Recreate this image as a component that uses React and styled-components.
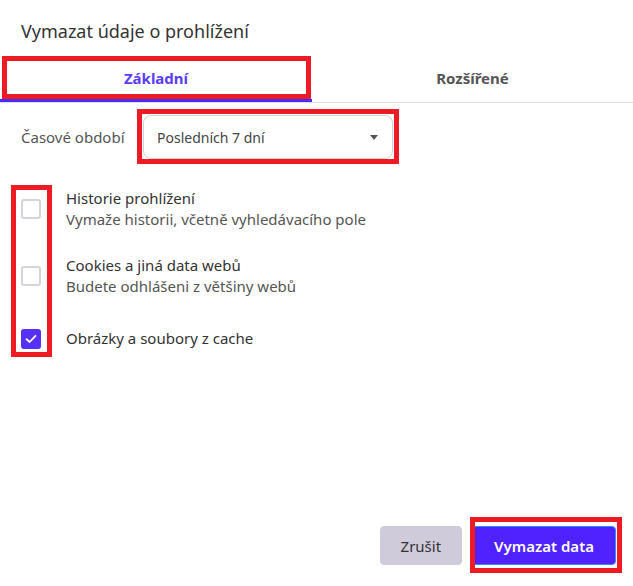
import React from 'react';
import styled, { createGlobalStyle } from 'styled-components';

const GlobalStyle = createGlobalStyle`
  html, body {
    margin: 0;
    padding: 0;
    background: #ffffff;
  }
  body {
    font-family: "Noto Sans", "Open Sans", Arial, sans-serif;
  }
`;

const Dialog = styled.div`
  position: relative;
  width: 633px;
  height: 586px;
  display: flex;
  flex-direction: column;
  background: #fff;
  color: #333;
  overflow: hidden;
`;

const Title = styled.h1`
  margin: 0;
  height: 56px;
  padding: 6px 21px 0;
  display: flex;
  align-items: center;
  font-size: 18px;
  font-weight: 400;
  color: #333;
  box-sizing: border-box;
`;

const TabBar = styled.div`
  display: flex;
  border-bottom: 1px solid #dcdcdc;
`;

const Tab = styled.div`
  flex: ${p => (p.$first ? '0 0 312px' : '1')};
  height: 46px;
  display: flex;
  align-items: center;
  justify-content: center;
  box-sizing: border-box;
  font-size: 15px;
  font-weight: 700;
  color: ${p => (p.$active ? '#5a3cf8' : '#555')};
  border-bottom: 3px solid ${p => (p.$active ? '#4a2bff' : 'transparent')};
`;

const Content = styled.div`
  padding: 12px 21px 0;
  display: flex;
  flex-direction: column;
`;

const PeriodRow = styled.div`
  display: flex;
  align-items: center;
`;

const PeriodLabel = styled.span`
  width: 122px;
  font-size: 15px;
  color: #555;
`;

const Select = styled.div`
  width: 250px;
  height: 44px;
  box-sizing: border-box;
  border: 1px solid #d2d2d2;
  border-radius: 8px;
  display: flex;
  align-items: center;
  justify-content: space-between;
  padding: 0 14px 0 13px;
  font-size: 14px;
  color: #444;
`;

const Caret = styled.span`
  width: 0;
  height: 0;
  border-left: 4px solid transparent;
  border-right: 4px solid transparent;
  border-top: 5px solid #555;
`;

const OptionList = styled.div`
  margin-top: 29px;
  display: flex;
  flex-direction: column;
  gap: 25px;
`;

const Option = styled.div`
  display: flex;
  align-items: center;
  gap: 25px;
  margin-top: ${p => (p.$single ? '6px' : '0')};
`;

const Box = styled.span`
  width: 20px;
  height: 20px;
  box-sizing: border-box;
  border-radius: 3px;
  flex: none;
  display: flex;
  align-items: center;
  justify-content: center;
  border: ${p => (p.$checked ? 'none' : '2px solid #d4d4da')};
  background: ${p => (p.$checked ? '#5630f6' : '#fff')};
`;

const OptionText = styled.div`
  display: flex;
  flex-direction: column;
  font-size: 15px;
  line-height: 21px;
`;

const OptionTitle = styled.span`
  color: #333;
`;

const OptionDesc = styled.span`
  color: #555;
`;

const Footer = styled.div`
  margin-top: auto;
  display: flex;
  justify-content: flex-end;
  gap: 10px;
  padding: 0 17px 21px 0;
`;

const Button = styled.button`
  height: 39px;
  padding: 0 ${p => (p.$primary ? '21px' : '20px')};
  border-radius: 4px;
  font-family: inherit;
  font-size: 15px;
  font-weight: ${p => (p.$primary ? 600 : 400)};
  color: ${p => (p.$primary ? '#fff' : '#333')};
  background: ${p => (p.$primary ? '#4f22ff' : '#cfcbdb')};
  border: 1px solid ${p => (p.$primary ? '#2f8cff' : '#cfcbdb')};
`;

const Highlight = styled.div`
  position: absolute;
  left: ${p => p.$x}px;
  top: ${p => p.$y}px;
  width: ${p => p.$w}px;
  height: ${p => p.$h}px;
  box-sizing: border-box;
  border: 5px solid #ed1c24;
  pointer-events: none;
`;

const Check = () => (
  <svg width="12" height="10" viewBox="0 0 12 10">
    <polyline points="1.5,5.2 4.6,8 10.5,1.8" fill="none" stroke="#fff" strokeWidth="1.8" strokeLinecap="round" strokeLinejoin="round" />
  </svg>
);

const OPTIONS = [
  { title: 'Historie prohlížení', desc: 'Vymaže historii, včetně vyhledávacího pole', checked: false },
  { title: 'Cookies a jiná data webů', desc: 'Budete odhlášeni z většiny webů', checked: false },
  { title: 'Obrázky a soubory z cache', checked: true },
];

export default function App() {
  return (
    <Dialog>
      <GlobalStyle />
      <Title>Vymazat údaje o prohlížení</Title>
      <TabBar>
        <Tab $first $active>Základní</Tab>
        <Tab>Rozšířené</Tab>
      </TabBar>
      <Content>
        <PeriodRow>
          <PeriodLabel>Časové období</PeriodLabel>
          <Select>
            Posledních 7 dní
            <Caret />
          </Select>
        </PeriodRow>
        <OptionList>
          {OPTIONS.map(o => (
            <Option key={o.title} $single={!o.desc}>
              <Box $checked={o.checked}>{o.checked && <Check />}</Box>
              <OptionText>
                <OptionTitle>{o.title}</OptionTitle>
                {o.desc && <OptionDesc>{o.desc}</OptionDesc>}
              </OptionText>
            </Option>
          ))}
        </OptionList>
      </Content>
      <Footer>
        <Button>Zrušit</Button>
        <Button $primary>Vymazat data</Button>
      </Footer>

      <Highlight $x={2} $y={56} $w={309} $h={43} />
      <Highlight $x={137} $y={109} $w={262} $h={55} />
      <Highlight $x={11} $y={185} $w={41} $h={172} />
      <Highlight $x={470} $y={517} $w={152} $h={56} />
    </Dialog>
  );
}
